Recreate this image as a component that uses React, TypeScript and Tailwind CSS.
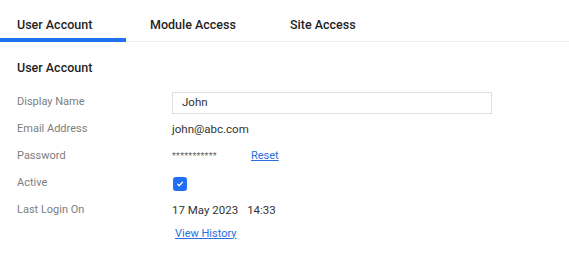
import React from "react";

const font = { fontFamily: "Roboto, 'Noto Sans', sans-serif" };

const Row = ({ label, children }: { label: string; children: React.ReactNode }) => (
  <div className="flex h-[27px] items-center">
    <div className="w-[155px] text-[11px] text-[#7d7d7d]">{label}</div>
    <div className="flex items-center">{children}</div>
  </div>
);

const App = () => {
  return (
    <div className="w-[569px] h-[264px] bg-white" style={font}>
      {/* tabs */}
      <div className="flex items-start h-[42px] border-b border-[#eeeeee]">
        <div className="w-[126px] h-[42px] pl-[17px] pt-[13px] flex items-center border-b-4 border-[#1e72f0] text-[12.5px] font-medium text-[#1f1f1f]">
          User Account
        </div>
        <div className="w-[140px] h-[42px] pl-[24px] pt-[9px] flex items-center text-[12.5px] font-medium text-[#1f1f1f]">
          Module Access
        </div>
        <div className="h-[42px] pl-[24px] pt-[9px] flex items-center text-[12.5px] font-medium text-[#1f1f1f]">
          Site Access
        </div>
      </div>

      <div className="pl-[17px] pt-[13px]">
        <div className="h-[27px] flex items-center text-[12.5px] font-medium text-[#1f1f1f] mb-[7px]">
          User Account
        </div>

        <Row label="Display Name">
          <div className="w-[320px] h-[22px] border border-[#dedede] flex items-center pl-[9px] text-[11.5px] text-[#333]">
            John
          </div>
        </Row>
        <Row label="Email Address">
          <span className="text-[11.5px] text-[#333]">john@abc.com</span>
        </Row>
        <Row label="Password">
          <span className="w-[79px] text-[9px] text-[#666] tracking-[0.2px]">***********</span>
          <a href="#" className="text-[11px] text-[#2a6fe0] underline">
            Reset
          </a>
        </Row>
        <Row label="Active">
          <div className="ml-[1px] w-[14px] h-[14px] rounded-[3px] bg-[#1e6ff5] flex items-center justify-center">
            <svg width="8" height="8" viewBox="0 0 10 10" fill="none">
              <path d="M2 5.2l2 2 4-4.4" stroke="white" strokeWidth="1.6" strokeLinecap="round" strokeLinejoin="round" />
            </svg>
          </div>
        </Row>
        <Row label="Last Login On">
          <span className="text-[11.5px] text-[#333]">17 May 2023</span>
          <span className="ml-[9px] text-[11.5px] text-[#333]">14:33</span>
        </Row>
        <div className="h-[20px] flex items-center pl-[158px]">
          <a href="#" className="text-[11px] text-[#2a6fe0] underline">
            View History
          </a>
        </div>
      </div>
    </div>
  );
};

export default App;
